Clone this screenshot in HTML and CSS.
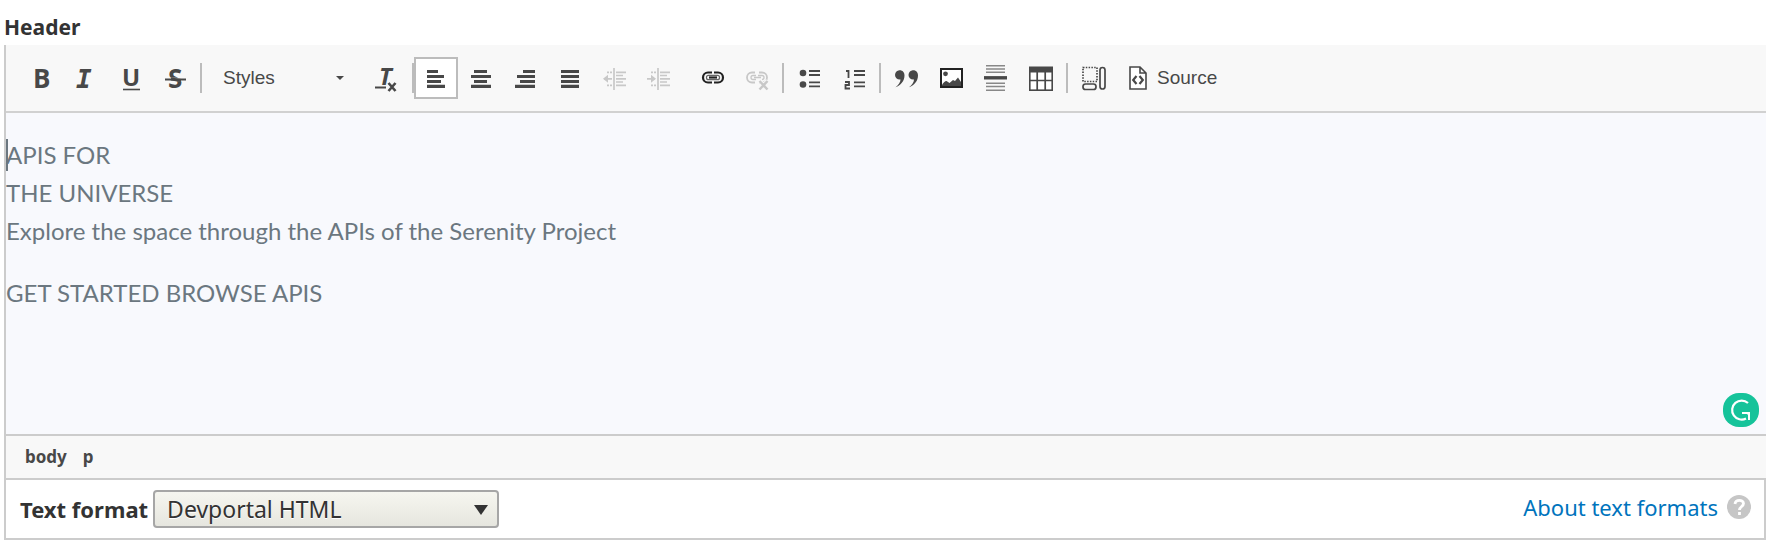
FILE: index.html
```html
<!DOCTYPE html>
<html lang="en">
<head>
<meta charset="utf-8">
<title>Header</title>
<link rel="stylesheet" href="styles.css">
</head>
<body>
<main class="field">
  <h1 class="field-label">Header</h1>
  <section class="editor" aria-label="Header editor">
    <div class="toolbar" role="toolbar" aria-label="Formatting">
      <div class="group">
        <button class="tool" type="button" aria-label="Bold"><svg viewBox="0 0 44 42"><text class="glyph" x="14" y="31">B</text></svg></button>
        <button class="tool" type="button" aria-label="Italic"><svg viewBox="0 0 44 42"><text class="glyph glyph-italic" x="12" y="31">I</text></svg></button>
        <button class="tool" type="button" aria-label="Underline"><svg viewBox="0 0 44 42"><text class="glyph glyph-small" x="13" y="29">U</text><path d="M14 32.500h17" stroke-width="1.600"/></svg></button>
        <button class="tool" type="button" aria-label="Strikethrough"><svg viewBox="0 0 44 42"><text class="glyph" x="14" y="31">S</text><path d="M11 22.500h21" stroke="#f8f8f8" stroke-width="3.500"/><path d="M11 22.500h21" stroke-width="2"/><path d="M17 22l10 1.500" stroke-width="3"/></svg></button>
      </div>
      <span class="separator"></span>
      <button class="styles" type="button"><span>Styles</span><svg class="caret-down" viewBox="0 0 8 4"><path class="solid" d="M0 0h8L4 4z"/></svg></button>
      <button class="tool" type="button" aria-label="Remove format"><svg viewBox="0 0 44 42"><text class="glyph glyph-small glyph-italic-sans" x="14" y="28">T</text><path d="M10 30.500h11" stroke-width="2"/><path d="M23.500 26l7 8M30.500 26l-7 8" stroke-width="2.600"/></svg></button>
      <span class="separator separator-tight"></span>
      <div class="group">
        <button class="tool tool-on" type="button" aria-label="Align left" aria-pressed="true"><svg viewBox="0 0 44 42"><path d="M13 14.500h11M13 19.500h17M13 24.500h14M13 29.300h18" stroke-width="3.200"/></svg></button>
        <button class="tool" type="button" aria-label="Center"><svg viewBox="0 0 44 42"><path d="M15 14.500h13M12 19.500h20M15 24.500h13M12 29.300h20" stroke-width="3.200"/></svg></button>
        <button class="tool" type="button" aria-label="Align right"><svg viewBox="0 0 44 42"><path d="M19 14.500h12M13 19.500h18M16 24.500h15M11 29.300h20" stroke-width="3.200"/></svg></button>
        <button class="tool" type="button" aria-label="Justify"><svg viewBox="0 0 44 42"><path d="M12 14.500h18M12 19.500h18M12 24.500h18M12 29.300h18" stroke-width="3.200"/></svg></button>
        <button class="tool" type="button" aria-label="Decrease indent" disabled><svg viewBox="0 0 44 42"><path d="M20 11v22M22 15.300h10M22 18.500h7M22 21.800h10M22 25h7M22 28.300h10M10 21.800h8M13 15.300h2m1 0h2M13 28.300h2m1 0h2" stroke-width="1.700"/><path class="solid" d="M9 21.800l5-4v8z"/></svg></button>
        <button class="tool" type="button" aria-label="Increase indent" disabled><svg viewBox="0 0 44 42"><path d="M19 11v22M21 15.300h10M21 18.500h7M21 21.800h10M21 25h7M21 28.300h10M8 21.800h8M12 15.300h2m1 0h2M12 28.300h2m1 0h2" stroke-width="1.700"/><path class="solid" d="M17 21.800l-5-4v8z"/></svg></button>
      </div>
      <div class="group group-spaced">
        <button class="tool" type="button" aria-label="Link"><svg viewBox="0 0 44 42"><g stroke="#222"><rect x="12" y="15.500" width="20" height="10" rx="5" stroke-width="2.200"/><rect x="15.500" y="18.300" width="13" height="4.400" rx="2" stroke="#666" stroke-width="1.200"/><path d="M22 14v3M22 24v3" stroke="#f8f8f8" stroke-width="2"/><path d="M18 20.500h8" stroke-width="2.200"/></g></svg></button>
        <button class="tool" type="button" aria-label="Unlink" disabled><svg viewBox="0 0 44 42"><rect x="11" y="15.500" width="20" height="10" rx="5" stroke-width="1.800"/><path d="M20 18.500h-3a2 2 0 0 0 0 4h3M22 18.500h4a2 2 0 0 1 0 4M18 20.500h7" stroke-width="1.300"/><path d="M21 14v3M21 24v3M23.500 23.500l8 9M31.500 23.500l-8 9" stroke="#f8f8f8" stroke-width="4"/><path d="M23.500 24l8 8.500M31.500 24l-8 8.500" stroke-width="2.500"/></svg></button>
      </div>
      <span class="separator"></span>
      <div class="group">
        <button class="tool" type="button" aria-label="Bulleted list"><svg viewBox="0 0 44 42"><circle class="solid" cx="15" cy="16" r="3.300"/><circle class="solid" cx="15" cy="27.500" r="3.300"/><path d="M21 14h11M21 18h11M21 25.300h11M21 29.300h11" stroke-width="1.800"/></svg></button>
        <button class="tool" type="button" aria-label="Numbered list"><svg viewBox="0 0 44 42"><path d="M13 14h2.500v7M12 25h4v3h-3.500v3.500h4.500" stroke-width="1.800"/><path d="M21 14h11M21 18h11M21 25.300h11M21 29.300h11" stroke-width="1.800"/></svg></button>
      </div>
      <span class="separator"></span>
      <div class="group">
        <button class="tool" type="button" aria-label="Block quote"><svg viewBox="0 0 44 42"><path class="solid" d="M13.500 13.500c3.500-.8 6 1.500 6 5 0 5.500-4 10-9 11.800 3-2.500 5-5 5-7.800-3 .4-5.500-1.500-5.500-4.500 0-2.200 1.500-4 3.500-4.500zM27 13.500c3.500-.8 6 1.500 6 5 0 5.500-4 10-9 11.800 3-2.500 5-5 5-7.800-3 .4-5.500-1.500-5.500-4.500 0-2.200 1.500-4 3.500-4.500z"/></svg></button>
        <button class="tool" type="button" aria-label="Image"><svg viewBox="0 0 44 42"><rect x="11" y="12" width="21" height="18" fill="#fff" stroke="#222" stroke-width="2"/><circle class="solid" cx="15.500" cy="16.800" r="2.400"/><path class="solid" d="M12 28c1-2 3-4 4.500-4l3 2 3.500-3 2 1 3-3.500 3 4.500V29H12z"/></svg></button>
        <button class="tool" type="button" aria-label="Horizontal line"><svg viewBox="0 0 44 42"><path d="M11 8.700h19M11 12h19M11 15.300h19M11 26.200h19M11 29.500h19M11 33.300h19" stroke="#888" stroke-width="1.500"/><path d="M9 20.800h23" stroke-width="3.400"/></svg></button>
        <button class="tool" type="button" aria-label="Table"><svg viewBox="0 0 44 42"><rect x="9.800" y="10.800" width="22.400" height="22.400" fill="#fff" stroke-width="1.600"/><path d="M9 12.500h24" stroke-width="6"/><path d="M17.200 15v18M25.200 15v18M10 23.500h22" stroke-width="1.700"/></svg></button>
      </div>
      <span class="separator"></span>
      <button class="tool" type="button" aria-label="Show blocks"><svg viewBox="0 0 44 42"><rect x="11" y="10.500" width="14" height="14" stroke-width="1.700" stroke-dasharray="1.500 1.300"/><rect x="28" y="10.500" width="5" height="21.500" rx="2.500" stroke-width="1.700"/><rect x="11" y="27" width="13" height="5.500" rx="2.500" stroke-width="1.700"/></svg></button>
      <button class="source" type="button"><svg viewBox="0 0 18 24"><path d="M1 1h10l6 6v16H1zM11 1v6h6" fill="#fff" stroke-width="1.600"/><path d="M7.500 10l-3.300 4 3.300 4M10.500 10l3.300 4-3.300 4" stroke-width="2.200"/></svg><span>Source</span></button>
    </div>
    <div class="content" contenteditable="true" role="textbox" aria-multiline="true" aria-label="Header">
      <p><span class="cursor"></span>APIS FOR<br>THE UNIVERSE<br>Explore the space through the APIs of the Serenity Project</p>
      <p>GET STARTED BROWSE APIS</p>
      <svg class="checker" viewBox="0 0 36 34"><rect width="36" height="34" rx="16" fill="#15c39a" stroke="none"/><path d="M25 10a9.500 9.500 0 1 0-2 15.500" stroke="#fff" stroke-width="2.200"/><path d="M19 20h7v7" stroke="#fff" stroke-width="2"/><path d="M22 19h5v5z" fill="#fff" stroke="none"/></svg>
    </div>
    <nav class="path" aria-label="Elements path"><a href="#">body</a><a href="#">p</a></nav>
  </section>
  <div class="format">
    <label for="format">Text format</label>
    <div class="select-wrap">
      <select id="format"><option>Devportal HTML</option></select>
      <svg class="select-arrow" viewBox="0 0 14 10"><path d="M0 0h14L7 10z" fill="#333" stroke="none"/></svg>
    </div>
    <a class="about" href="#"><span>About text formats</span><svg viewBox="0 0 24 24"><circle cx="12" cy="12" r="12" fill="#c6c6c6" stroke="none"/><path d="M8 9c.5-5 8.500-4.500 8.500-.5 0 3-4 3-4 6.500M12.500 17v3" stroke="#fff" stroke-width="2.800"/></svg></a>
  </div>
</main>
</body>
</html>
```

FILE: styles.css
```css
* { box-sizing: border-box; }
body {
  margin: 0;
  background: #fff;
  color: #333;
  font-family: "Noto Sans", "Open Sans", sans-serif;
}
button { border: 0; padding: 0; background: none; color: inherit; }
svg { display: block; fill: none; stroke: #484848; }
.solid { fill: #484848; stroke: none; }
.field { padding: 10px 11px 0 4px; }
.field-label { margin: 0; font-size: 21px; line-height: 35px; font-weight: 700; }

.editor { border-left: 2px solid #ccc; }
.toolbar {
  display: flex;
  align-items: center;
  height: 68px;
  padding: 0 13px;
  background: #f8f8f8;
  border-bottom: 2px solid #d1d1d1;
}
.group { display: flex; gap: 1px; }
.group-spaced { margin-left: 8px; }
.tool { width: 44px; height: 42px; flex: none; }
.tool svg { width: 44px; height: 42px; }
.tool:disabled svg { stroke: #c8c8c8; }
.tool:disabled .solid { fill: #c8c8c8; }
.tool-on { background: #fff; box-shadow: inset 0 0 0 2px #bcbcbc; }
.separator { width: 2px; height: 30px; margin: 0 4px 0 2px; background: #bcbcbc; flex: none; }
.separator-tight { margin: 0 0 0 3px; }
.glyph { fill: #484848; stroke: none; font: 700 26px "Open Sans", sans-serif; }
.glyph-small { font-size: 24px; }
.glyph-italic { font: italic 700 26px "DejaVu Sans Mono", monospace; }
.glyph-italic-sans { font-style: italic; }
.styles, .source {
  display: flex;
  align-items: center;
  color: #484848;
  font: 19px/22px "Liberation Sans", Arial, sans-serif;
}
.styles { justify-content: space-between; width: 121px; margin: 0 21px 0 17px; }
.caret-down { width: 8px; height: 4px; }
.source { gap: 10px; margin-left: 13px; }
.source svg { width: 18px; height: 24px; }

.content {
  position: relative;
  min-height: 321px;
  padding: 23px 0;
  background: #f8f9fd;
  color: #6b7780;
  font: 24px/38px Lato, sans-serif;
  outline: 0;
}
.content p { position: relative; margin: 0 0 24px; }
.cursor { position: absolute; left: 0; top: 3px; width: 2px; height: 32px; background: #6b7780; }
.checker { position: absolute; right: 7px; bottom: 7px; width: 36px; height: 34px; }

.path {
  display: flex;
  align-items: center;
  gap: 16px;
  height: 44px;
  padding: 0 19px;
  border-top: 2px solid #ccc;
  background: #f8f8f8;
  font-size: 17px;
  line-height: 24px;
  font-weight: 700;
}
.path a { color: #484848; text-decoration: none; }

.format {
  display: flex;
  align-items: center;
  gap: 5px;
  padding: 10px 10px 10px 14px;
  border: 2px solid #ccc;
  font-size: 22px;
  line-height: 30px;
}
.format label { font-weight: 700; }
.select-wrap { position: relative; width: 346px; }
select {
  appearance: none;
  display: block;
  width: 100%;
  height: 38px;
  padding: 0 12px;
  border: 2px solid #a6a6a6;
  border-radius: 4px;
  background: linear-gradient(#f6f6f0, #e6e6df);
  color: #333;
  font: 23px/30px "Noto Sans", sans-serif;
  text-shadow: 0 1px #fff;
}
.select-arrow { position: absolute; right: 11px; top: 15px; width: 14px; height: 10px; pointer-events: none; }
.about {
  display: flex;
  align-items: center;
  gap: 9px;
  margin-left: auto;
  padding: 0 3px 4px 0;
  color: #0074bd;
  text-decoration: none;
}
.about svg { width: 24px; height: 24px; }
```
